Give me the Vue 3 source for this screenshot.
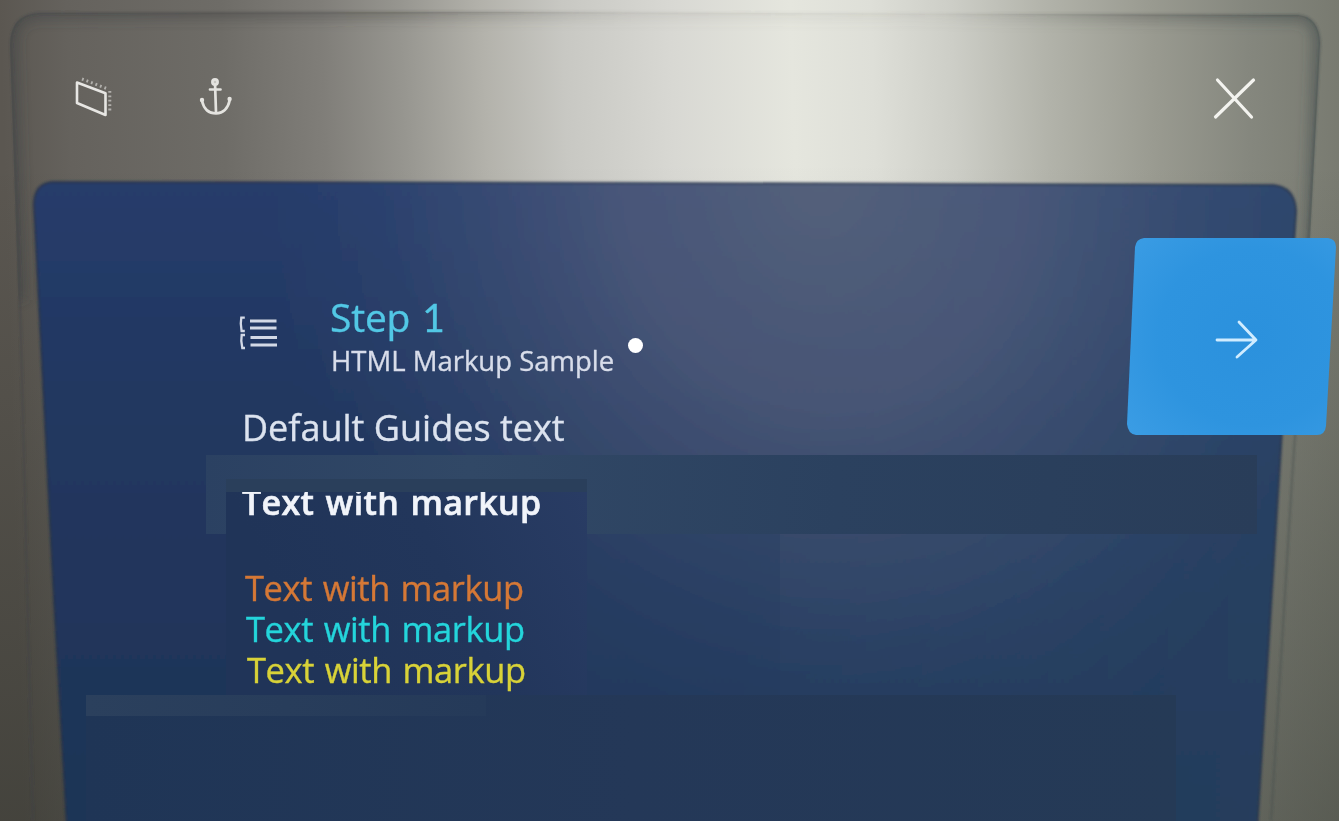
<script setup>
const markupLines = [
  { tone: 'orange', text: 'Text with markup' },
  { tone: 'cyan', text: 'Text with markup' },
  { tone: 'yellow', text: 'Text with markup' },
]
</script>

<template>
  <main class="scene">
    <svg class="backdrop" viewBox="0 0 1339 821" aria-hidden="true">
      <defs>
        <linearGradient id="metal" gradientUnits="userSpaceOnUse" x1="0" y1="20" x2="1339" y2="-20">
          <stop offset="0" stop-color="#5b5751" />
          <stop offset=".05" stop-color="#65625d" />
          <stop offset=".165" stop-color="#6e6c67" />
          <stop offset=".24" stop-color="#807e79" />
          <stop offset=".3" stop-color="#979690" />
          <stop offset=".36" stop-color="#b3b2ab" />
          <stop offset=".42" stop-color="#c8c8c3" />
          <stop offset=".5" stop-color="#d8d8d3" />
          <stop offset=".59" stop-color="#e5e6de" />
          <stop offset=".65" stop-color="#dedfd8" />
          <stop offset=".71" stop-color="#cdcec7" />
          <stop offset=".78" stop-color="#b2b3aa" />
          <stop offset=".86" stop-color="#999a90" />
          <stop offset=".93" stop-color="#85877e" />
          <stop offset="1" stop-color="#787a70" />
        </linearGradient>
        <linearGradient id="fall" x1="0" y1="0" x2="0" y2="1">
          <stop offset=".2" stop-color="#1c2019" stop-opacity="0" />
          <stop offset="1" stop-color="#1c2019" stop-opacity=".36" />
        </linearGradient>
        <linearGradient id="rim" gradientUnits="userSpaceOnUse" x1="0" y1="0" x2="1339" y2="0">
          <stop offset="0" stop-color="#3a4045" stop-opacity=".6" />
          <stop offset=".3" stop-color="#45433f" stop-opacity=".45" />
          <stop offset=".48" stop-color="#77756e" stop-opacity=".15" />
          <stop offset=".7" stop-color="#77756e" stop-opacity=".1" />
          <stop offset=".85" stop-color="#454a48" stop-opacity=".4" />
          <stop offset="1" stop-color="#3c4648" stop-opacity=".65" />
        </linearGradient>
        <linearGradient id="blue" x1="0" y1="0" x2="0" y2="1">
          <stop offset="0" stop-color="#263c6b" />
          <stop offset=".4" stop-color="#22375f" />
          <stop offset="1" stop-color="#1e3556" />
        </linearGradient>
        <radialGradient id="glow" gradientUnits="userSpaceOnUse" cx="0" cy="0" r="1" gradientTransform="translate(820 180) rotate(-4) scale(560 640)">
          <stop offset="0" stop-color="#767b87" stop-opacity=".57" />
          <stop offset=".35" stop-color="#6e738a" stop-opacity=".48" />
          <stop offset=".58" stop-color="#5f6c86" stop-opacity=".32" />
          <stop offset=".8" stop-color="#4f6586" stop-opacity=".14" />
          <stop offset="1" stop-color="#465c80" stop-opacity="0" />
        </radialGradient>
        <linearGradient id="side" gradientUnits="userSpaceOnUse" x1="700" y1="0" x2="1290" y2="0">
          <stop offset="0" stop-color="#34526a" stop-opacity="0" />
          <stop offset="1" stop-color="#34526a" stop-opacity=".35" />
        </linearGradient>
        <linearGradient id="band" gradientUnits="userSpaceOnUse" x1="206" y1="455" x2="1257" y2="534">
          <stop offset="0" stop-color="#2b4162" />
          <stop offset=".25" stop-color="#314866" />
          <stop offset=".6" stop-color="#2b415f" />
          <stop offset="1" stop-color="#293d59" />
        </linearGradient>
        <linearGradient id="strip" x1="0" y1="0" x2="1" y2="0">
          <stop offset="0" stop-color="#2b405d" />
          <stop offset="1" stop-color="#253a59" />
        </linearGradient>
        <linearGradient id="foot" x1="0" y1="0" x2="1" y2="0">
          <stop offset="0" stop-color="#1f3556" />
          <stop offset=".5" stop-color="#243858" />
          <stop offset="1" stop-color="#253a56" />
        </linearGradient>
        <linearGradient id="block" gradientUnits="userSpaceOnUse" x1="300" y1="640" x2="587" y2="500">
          <stop offset="0" stop-color="#203458" />
          <stop offset=".5" stop-color="#22365b" />
          <stop offset="1" stop-color="#293c64" />
        </linearGradient>
        <filter id="soft" x="-5%" y="-5%" width="110%" height="110%"><feGaussianBlur stdDeviation="6" /></filter>
        <filter id="edge" x="-2%" y="-2%" width="104%" height="104%"><feGaussianBlur stdDeviation=".8" /></filter>
        <clipPath id="frameClip"><path d="M33 821 L17 260 L10 45 Q10 14 40 13 L500 12 L1298 15 Q1319 17 1320 43 L1309 260 L1271 821Z" /></clipPath>
      </defs>
      <rect width="1339" height="821" fill="url(#metal)" />
      <rect width="1339" height="821" fill="url(#fall)" />
      <g clip-path="url(#frameClip)">
        <path d="M19 300 L11 45 Q11 14 40 13 L500 12 L1298 15 Q1319 17 1319 43 L1309 300" fill="none" stroke="url(#rim)" stroke-opacity=".75" stroke-width="14" filter="url(#soft)" />
      </g>
      <path d="M33 821 L19 260 L11 45 Q11 14 40 13 L500 12 L1298 15 Q1319 17 1320 43 L1309 230 L1292 480 L1271 821" fill="none" stroke="url(#rim)" stroke-opacity=".75" stroke-width="2" filter="url(#edge)" />
      <g filter="url(#edge)">
        <path d="M67 830 L54 600 L34 207 Q33 184 52 182 L650 183 L1273 185 Q1295 187 1296 211 L1282 430 L1257 830Z" fill="url(#blue)" />
        <path d="M67 830 L54 600 L34 207 Q33 184 52 182 L650 183 L1273 185 Q1295 187 1296 211 L1282 430 L1257 830Z" fill="url(#side)" />
        <path d="M67 830 L54 600 L34 207 Q33 184 52 182 L650 183 L1273 185 Q1295 187 1296 211 L1282 430 L1257 830Z" fill="url(#glow)" />
        <path d="M67 830 L54 600 L34 207 Q33 184 52 182 L650 183 L1273 185 Q1295 187 1296 211 L1282 430 L1257 830" fill="none" stroke="#27334a" stroke-opacity=".65" stroke-width="2.5" />
      </g>
      <rect x="587" y="534" width="193" height="161" fill="#243b62" fill-opacity=".35" />
      <rect x="206" y="455" width="1051" height="79" fill="url(#band)" />
      <rect x="226" y="479" width="361" height="13" fill="#2a3f5b" />
      <rect x="226" y="492" width="361" height="203" fill="url(#block)" />
      <rect x="86" y="695" width="1090" height="126" fill="url(#foot)" />
      <rect x="86" y="695" width="400" height="21" fill="url(#strip)" />
    </svg>

    <header class="toolbar">
      <div class="tools">
        <svg width="42" height="42" viewBox="0 0 42 42" fill="none">
          <path d="M4 6.5 L32.5 17.3 L32.5 39 L4 27Z" stroke="#e7e6e3" stroke-width="2.6" stroke-linejoin="round" />
          <path d="M9 3 L35 13" stroke="#c4c3bf" stroke-width="3" stroke-dasharray="1.8 3" stroke-opacity=".8" />
          <path d="M36.8 15 V36" stroke="#c4c3bf" stroke-width="3" stroke-dasharray="1.8 2.6" stroke-opacity=".8" />
        </svg>
        <svg width="34" height="40" viewBox="0 0 34 40" fill="none" stroke="#e4e3df" stroke-width="2.7" stroke-linecap="round">
          <circle cx="17" cy="6" r="2.6" fill="#c6c5c0" />
          <path d="M17.1 9 L18 36.5 M12 13.5 H22.5 M4 25 Q7 37.5 18 37.5 Q29 37 31.8 24" />
          <circle cx="4" cy="24" r="1.3" fill="#e4e3df" stroke-width="1.8" />
          <circle cx="31.6" cy="23" r="1.3" fill="#e4e3df" stroke-width="1.8" />
        </svg>
      </div>
      <svg width="44" height="44" viewBox="0 0 44 44" fill="none" stroke="#f3f3ef" stroke-width="3.2" stroke-linecap="round">
        <path d="M5.5 4 L39.5 41 M41.5 4 L3.5 41" />
      </svg>
    </header>

    <section class="guide">
      <div class="heading">
        <svg class="steps" width="42" height="36" viewBox="0 0 42 36" fill="none" stroke="#d3d9e6" stroke-width="2.8">
          <path d="M12 6 H38.5 M12 13 H38.5 M12.5 22.5 H39 M12.5 30 H39" />
          <path d="M6.8 2.7 H3.3 L2.8 8.5 L3.6 16 H6.8 M7 20 H3.7 L3.3 26 L4.3 33 H7" stroke-width="2.3" />
        </svg>
        <div class="titles">
          <h1>Step <span class="numeral">1</span></h1>
          <h2>HTML Markup Sample</h2>
        </div>
        <span class="dot"></span>
      </div>
      <p class="default">Default Guides text</p>
      <div class="crop"><p class="bold">Text with markup</p></div>
      <p v-for="line in markupLines" :key="line.tone" class="line" :class="line.tone">{{ line.text }}</p>
    </section>

    <button class="next" aria-label="Next">
      <svg width="212" height="204" viewBox="0 0 212 204">
        <defs>
          <radialGradient id="tile" cx=".6" cy=".5" r=".75">
            <stop offset="0" stop-color="#2b91dd" />
            <stop offset=".6" stop-color="#2e94df" />
            <stop offset="1" stop-color="#3a9ce4" />
          </radialGradient>
        </defs>
        <path d="M17 3 L201 3 Q209 4 209 12 L199 191 Q198 200 190 200 L9 200 Q1 199 0 189 L8 12 Q9 4 17 3Z" fill="url(#tile)" />
        <path d="M90 105 H128 M112 87 L129 105 L110 122" fill="none" stroke="#d0ecff" stroke-width="2.8" stroke-linecap="round" stroke-linejoin="round" />
      </svg>
    </button>
  </main>
</template>

<style>
body { margin: 0; overflow: hidden; }
</style>

<style scoped>
.scene {
  position: relative;
  width: 1339px;
  height: 821px;
  overflow: hidden;
  font-family: "Open Sans", "Noto Sans", sans-serif;
}
.backdrop { position: absolute; inset: 0; width: 1339px; height: 821px; }
.toolbar {
  position: relative;
  box-sizing: border-box;
  height: 183px;
  padding: 76px 83px 0 73px;
  display: flex;
  justify-content: space-between;
  align-items: flex-start;
  filter: blur(.45px);
}
.tools { display: flex; gap: 83px; }
.guide {
  position: relative;
  padding: 111px 0 0 238px;
  filter: blur(.55px);
  -webkit-text-stroke: .35px currentColor;
}
h1, h2, p { margin: 0; font-weight: 400; white-space: nowrap; }
.heading { display: flex; height: 110px; }
.steps { margin-top: 21px; }
.titles { margin-left: 50px; width: 290px; }
h1 { height: 49px; color: #52c8e5; font-size: 39px; line-height: 45px; letter-spacing: -.2px; word-spacing: 2px; }
.numeral { font-family: Lato, sans-serif; }
h2 { margin-top: -1px; padding-left: 1px; color: #d8ddea; font-size: 27.5px; line-height: 38px; }
.dot { width: 15px; height: 15px; margin: 44px 0 0 8px; border-radius: 50%; background: #fff; }
.default { height: 88px; padding-left: 4px; color: #dce3ef; font-size: 36px; line-height: 47px; }
.crop { height: 75px; overflow: hidden; }
.bold { margin-top: -1px; padding-left: 4px; color: #f1f4fa; font-size: 34px; font-weight: 600; line-height: 22px; letter-spacing: .35px; word-spacing: 2px; -webkit-text-stroke: .6px currentColor; }
.line { padding-left: 7px; font-size: 34.5px; line-height: 41px; letter-spacing: -.4px; word-spacing: 2px; }
.orange { color: #d57836; }
.cyan { color: #24d5db; padding-left: 8px; }
.yellow { color: #d8d238; padding-left: 9px; }
.next {
  position: absolute;
  left: 1127px;
  top: 235px;
  padding: 0;
  border: 0;
  background: none;
  line-height: 0;
  filter: blur(.4px);
}
</style>
